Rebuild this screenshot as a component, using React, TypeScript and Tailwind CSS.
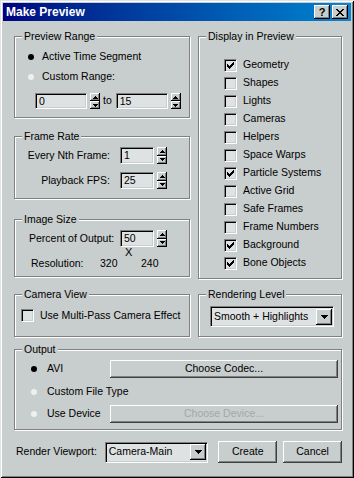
import type { ReactNode } from "react";

const raised =
  "shadow-[inset_-1px_-1px_0_#000,inset_1px_1px_0_#fff,inset_-2px_-2px_0_#808080]";
const sunken =
  "border border-t-[#808080] border-l-[#808080] border-b-white border-r-white shadow-[inset_1px_1px_0_#000,inset_-1px_-1px_0_#c8cdcd]";

function Group({
  title,
  className,
  children,
}: {
  title: string;
  className: string;
  children?: ReactNode;
}) {
  return (
    <div
      className={[
        "relative border border-[#808080] shadow-[1px_1px_0_#fff,inset_1px_1px_0_#fff]",
        className,
      ].join(" ")}
    >
      <span className="absolute -top-[7px] left-[7px] bg-[#c8cdcd] px-[2px] leading-[13px]">
        {title}
      </span>
      {children}
    </div>
  );
}

function Radio({ on }: { on?: boolean }) {
  return (
    <span
      className={[
        "block h-[6px] w-[6px] shrink-0 rounded-full",
        on ? "bg-black" : "bg-[#eef0f0]",
      ].join(" ")}
    />
  );
}

function Check({ on }: { on?: boolean }) {
  return (
    <span
      className={`flex h-[13px] w-[13px] shrink-0 items-center justify-center bg-[#dfe2e2] ${sunken}`}
    >
      {on && (
        <svg width="7" height="7" viewBox="0 0 7 7" shapeRendering="crispEdges">
          <path d="M6 0h1v1H6z M5 1h2v1H5z M0 2h1v1H0z M4 2h3v1H4z M0 3h2v1H0z M3 3h3v1H3z M0 4h5v1H0z M1 5h3v1H1z M2 6h1v1H2z" />
        </svg>
      )}
    </span>
  );
}

function Spinner({ h }: { h: string }) {
  return (
    <div className={`ml-[3px] flex w-[10px] flex-col ${h}`}>
      <span className={`flex flex-1 items-center justify-center bg-[#c8cdcd] ${raised}`}>
        <svg width="5" height="3" viewBox="0 0 5 3" shapeRendering="crispEdges">
          <path d="M2 0h1v1H2z M1 1h3v1H1z M0 2h5v1H0z" />
        </svg>
      </span>
      <span className={`flex flex-1 items-center justify-center bg-[#c8cdcd] ${raised}`}>
        <svg width="5" height="3" viewBox="0 0 5 3" shapeRendering="crispEdges">
          <path d="M0 0h5v1H0z M1 1h3v1H1z M2 2h1v1H2z" />
        </svg>
      </span>
    </div>
  );
}

function Field({ value, w, h }: { value: string; w: string; h: string }) {
  return (
    <div className={`flex items-center bg-[#dfe2e2] pl-[3px] leading-none ${sunken} ${w} ${h}`}>
      {value}
    </div>
  );
}

function Dropdown({ value, w }: { value: string; w: string }) {
  return (
    <div className={`flex h-[21px] items-center bg-[#dfe2e2] ${sunken} ${w}`}>
      <span className="flex-1 pl-[3px]">{value}</span>
      <span
        className={`mr-[1px] flex h-[16px] w-[16px] items-center justify-center bg-[#c8cdcd] ${raised}`}
      >
        <svg width="7" height="4" viewBox="0 0 7 4" shapeRendering="crispEdges">
          <path d="M0 0h7v1H0z M1 1h5v1H1z M2 2h3v1H2z M3 3h1v1H3z" />
        </svg>
      </span>
    </div>
  );
}

function Button({
  label,
  className,
  disabled,
}: {
  label: string;
  className: string;
  disabled?: boolean;
}) {
  return (
    <button
      type="button"
      className={[
        "flex items-center justify-center bg-[#c8cdcd]",
        "shadow-[inset_-1px_-1px_0_#404040,inset_1px_1px_0_#fff,inset_-2px_-2px_0_#808080]",
        disabled ? "text-[#a3a8a8]" : "text-black",
        className,
      ].join(" ")}
    >
      {label}
    </button>
  );
}

const displayItems: [string, boolean][] = [
  ["Geometry", true],
  ["Shapes", false],
  ["Lights", false],
  ["Cameras", false],
  ["Helpers", false],
  ["Space Warps", false],
  ["Particle Systems", true],
  ["Active Grid", false],
  ["Safe Frames", false],
  ["Frame Numbers", false],
  ["Background", true],
  ["Bone Objects", true],
];

export default function App() {
  return (
    <div
      className="h-[478px] w-[354px] bg-[#c8cdcd] p-[3px] font-['Liberation_Sans',Arial,sans-serif] text-[10.5px] text-black shadow-[inset_1px_1px_0_#dfe3e3,inset_-1px_-1px_0_#000,inset_2px_2px_0_#fff,inset_-2px_-2px_0_#808080]"
    >
      {/* title bar */}
      <div className="flex h-[18px] items-center bg-gradient-to-r from-[#000080] to-[#1084d0] pl-[3px] pr-[3px]">
        <span className="flex-1 text-[12px] font-bold text-white">Make Preview</span>
        <span
          className={`flex h-[14px] w-[16px] items-center justify-center bg-[#c8cdcd] text-[11px] font-bold leading-none ${raised}`}
        >
          ?
        </span>
        <span
          className={`ml-[2px] flex h-[14px] w-[16px] items-center justify-center bg-[#c8cdcd] ${raised}`}
        >
          <svg width="8" height="7" viewBox="0 0 8 7" shapeRendering="crispEdges">
            <path d="M0 0h2v1H0z M6 0h2v1H6z M1 1h2v1H1z M5 1h2v1H5z M2 2h4v1H2z M3 3h2v1H3z M2 4h4v1H2z M1 5h2v1H1z M5 5h2v1H5z M0 6h2v1H0z M6 6h2v1H6z" />
          </svg>
        </span>
      </div>

      <div className="pl-[11px] pr-[9px] pt-[15px]">
        <div className="flex gap-[8px]">
          {/* LEFT */}
          <div className="w-[176px]">
            <Group title="Preview Range" className="h-[82px] pt-[10px]">
              <div className="flex h-[20px] items-center pl-[13px]">
                <Radio on />
                <span className="ml-[8px]">Active Time Segment</span>
              </div>
              <div className="flex h-[20px] items-center pl-[13px]">
                <Radio />
                <span className="ml-[8px]">Custom Range:</span>
              </div>
              <div className="mt-[6px] flex items-center pl-[20px]">
                <Field value="0" w="w-[52px]" h="h-[16px]" />
                <Spinner h="h-[16px]" />
                <span className="ml-[3px]">to</span>
                <span className="ml-[4px]">
                  <Field value="15" w="w-[52px]" h="h-[16px]" />
                </span>
                <Spinner h="h-[16px]" />
              </div>
            </Group>

            <Group title="Frame Rate" className="mt-[18px] h-[63px] pt-[10px]">
              <div className="flex h-[17px] items-center">
                <span className="w-[105px] pr-[10px] text-right">Every Nth Frame:</span>
                <Field value="1" w="w-[34px]" h="h-[17px]" />
                <Spinner h="h-[17px]" />
              </div>
              <div className="mt-[8px] flex h-[17px] items-center">
                <span className="w-[105px] pr-[10px] text-right">Playback FPS:</span>
                <Field value="25" w="w-[34px]" h="h-[17px]" />
                <Spinner h="h-[17px]" />
              </div>
            </Group>

            <Group title="Image Size" className="mt-[20px] h-[58px] pt-[10px]">
              <div className="flex h-[17px] items-center">
                <span className="w-[105px] pl-[14px]">Percent of Output:</span>
                <Field value="50" w="w-[34px]" h="h-[17px]" />
                <Spinner h="h-[17px]" />
              </div>
              <div className="h-[10px] pl-[110px] text-[11px] leading-[10px]">X</div>
              <div className="flex h-[13px] items-center pl-[16px]">
                <span className="w-[69px]">Resolution:</span>
                <span className="w-[41px]">320</span>
                <span>240</span>
              </div>
            </Group>
          </div>

          {/* RIGHT */}
          <Group title="Display in Preview" className="h-[243px] w-[144px] pl-[25px] pt-[19px]">
            {displayItems.map(([label, on]) => (
              <div key={label} className="flex h-[18px] items-center">
                <Check on={on} />
                <span className="ml-[6px]">{label}</span>
              </div>
            ))}
          </Group>
        </div>

        <div className="mt-[15px] flex gap-[8px]">
          <Group title="Camera View" className="h-[43px] w-[176px] pl-[6px] pt-[14px]">
            <div className="flex h-[13px] items-center">
              <Check />
              <span className="ml-[6px]">Use Multi-Pass Camera Effect</span>
            </div>
          </Group>
          <Group title="Rendering Level" className="h-[43px] w-[144px] pl-[11px] pt-[11px]">
            <Dropdown value="Smooth + Highlights" w="w-[124px]" />
          </Group>
        </div>

        <Group title="Output" className="mt-[12px] h-[81px] pt-[10px]">
          <div className="flex h-[18px] items-center">
            <div className="flex w-[95px] items-center pl-[16px]">
              <Radio on />
              <span className="ml-[10px]">AVI</span>
            </div>
            <Button label="Choose Codec..." className="mr-[3px] h-[18px] flex-1" />
          </div>
          <div className="mt-[5px] flex h-[18px] items-center">
            <div className="flex w-[95px] items-center pl-[16px]">
              <Radio />
              <span className="ml-[10px] whitespace-nowrap">Custom File Type</span>
            </div>
          </div>
          <div className="mt-[4px] flex h-[18px] items-center">
            <div className="flex w-[95px] items-center pl-[16px]">
              <Radio />
              <span className="ml-[10px]">Use Device</span>
            </div>
            <Button label="Choose Device..." disabled className="mr-[3px] h-[18px] flex-1" />
          </div>
        </Group>

        <div className="mt-[11px] flex h-[22px] items-center pl-[2px]">
          <span className="w-[89px]">Render Viewport:</span>
          <Dropdown value="Camera-Main" w="w-[104px]" />
          <Button label="Create" className="ml-[10px] h-[22px] w-[59px]" />
          <Button label="Cancel" className="ml-[6px] h-[22px] w-[59px]" />
        </div>
      </div>
    </div>
  );
}
